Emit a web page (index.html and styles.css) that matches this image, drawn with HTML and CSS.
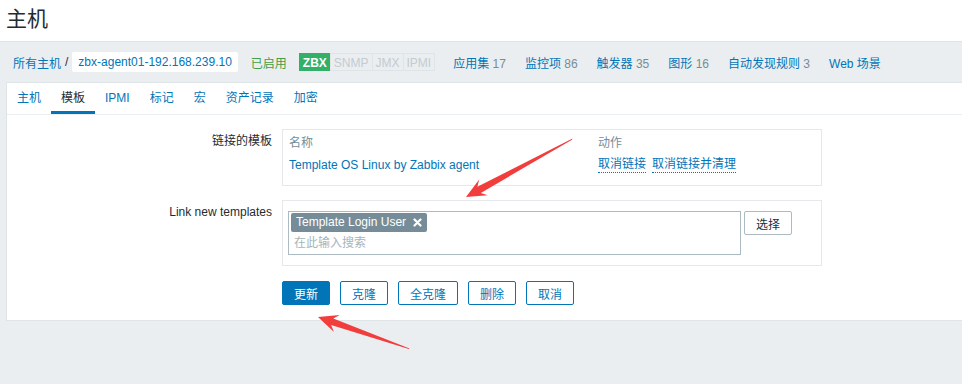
FILE: index.html
```html
<!DOCTYPE html>
<html lang="zh-CN">
<head>
    <meta charset="UTF-8">
    <title>主机</title>
    <link rel="stylesheet" href="styles.css">
</head>
<body>
    <header class="page-header">
        <h1>主机</h1>
    </header>

    <nav class="host-nav">
        <a class="crumb">所有主机</a>
        <span class="sep">/</span>
        <span class="host-name">zbx-agent01-192.168.239.10</span>
        <span class="status-on">已启用</span>
        <span class="iface-group">
            <span class="iface zbx">ZBX</span><span class="iface">SNMP</span><span class="iface">JMX</span><span class="iface">IPMI</span>
        </span>
        <a class="nav-link first">应用集 <span class="count">17</span></a>
        <a class="nav-link">监控项 <span class="count">86</span></a>
        <a class="nav-link">触发器 <span class="count">35</span></a>
        <a class="nav-link">图形 <span class="count">16</span></a>
        <a class="nav-link">自动发现规则 <span class="count">3</span></a>
        <a class="nav-link">Web 场景</a>
    </nav>

    <main class="content">
        <div class="panel">
            <ul class="tabs">
                <li>主机</li>
                <li class="active">模板</li>
                <li>IPMI</li>
                <li>标记</li>
                <li>宏</li>
                <li>资产记录</li>
                <li>加密</li>
            </ul>

            <div class="form">
                <label class="form-label">链接的模板</label>
                <div class="form-box linked">
                    <span class="th">名称</span>
                    <span class="th">动作</span>
                    <a class="link">Template OS Linux by Zabbix agent</a>
                    <span class="actions">
                        <a class="dotted">取消链接</a>
                        <a class="dotted">取消链接并清理</a>
                    </span>
                </div>

                <label class="form-label">Link new templates</label>
                <div class="form-box new-templates">
                    <div class="multiselect">
                        <span class="tag">Template Login User
                            <svg class="tag-x" width="9" height="9" viewBox="0 0 9 9">
                                <path d="M1.5 1.5 L7.5 7.5 M7.5 1.5 L1.5 7.5" stroke="#fff" stroke-width="2.2" stroke-linecap="round"/>
                            </svg>
                        </span>
                        <span class="placeholder">在此输入搜索</span>
                    </div>
                    <button class="btn-alt">选择</button>
                </div>

                <div></div>
                <div class="buttons">
                    <button class="btn primary">更新</button>
                    <button class="btn">克隆</button>
                    <button class="btn">全克隆</button>
                    <button class="btn">删除</button>
                    <button class="btn">取消</button>
                </div>
            </div>
        </div>
    </main>

    <svg class="annotations" width="962" height="384" viewBox="0 0 962 384">
        <polygon fill="#f23d3d" points="572.5,138.5 477.4,186.7 479.2,179.5 466,197 487.8,195.3 480.8,192.9 572,139.8"/>
        <polygon fill="#f23d3d" points="409.5,348.5 333.3,318.5 339.8,315 318,317 334,332 331.1,325.1 408.8,349"/>
    </svg>
</body>
</html>
```

FILE: styles.css
```css
body {
    margin: 0;
    font-family: "Liberation Sans", Arial, "Noto Sans CJK SC", sans-serif;
    font-size: 12px;
    color: #1f2c33;
    background: #ebeef0;
    overflow: hidden;
    height: 384px;
    position: relative;
}
a {
    color: #0275b8;
    text-decoration: none;
}
.page-header {
    background: #fff;
    height: 42px;
    border-bottom: 1px solid #dfe4e7;
    box-sizing: border-box;
    padding-left: 6px;
}
.page-header h1 {
    margin: 0;
    font-size: 21px;
    font-weight: normal;
    line-height: 38px;
}
.host-nav {
    display: flex;
    align-items: center;
    height: 40px;
    padding-left: 13px;
    white-space: nowrap;
}
.sep {
    margin: 0 4px;
    color: #1f2c33;
}
.host-name {
    background: #fff;
    color: #0275b8;
    height: 20px;
    line-height: 20px;
    padding: 0 6px;
    border-radius: 2px;
}
.status-on {
    color: #429e47;
    margin-left: 13px;
}
.iface-group {
    display: flex;
    margin-left: 12px;
}
.iface {
    height: 18px;
    line-height: 18px;
    padding: 0 3px;
    border: 1px solid #dfe4e7;
    margin-left: -1px;
    color: #c2ccd1;
    box-sizing: border-box;
}
.iface.zbx {
    background: #34af67;
    border-color: #34af67;
    color: #fff;
    font-weight: bold;
    padding: 0 3px;
    margin-left: 0;
}
.nav-link {
    margin-left: 19px;
}
.nav-link.first {
    margin-left: 18px;
}
.count {
    color: #768d99;
}
.content {
    padding-left: 6px;
}
.panel {
    background: #fff;
    border: 1px solid #dfe4e7;
    border-right: none;
    height: 237px;
}
.tabs {
    list-style: none;
    margin: 0;
    padding: 0;
    display: flex;
    border-bottom: 1px solid #ebeef0;
}
.tabs li {
    height: 31px;
    line-height: 30px;
    padding: 0 10px;
    color: #0275b8;
    box-sizing: border-box;
}
.tabs li.active {
    color: #1f2c33;
    box-shadow: inset 0 -3px 0 #0275b8;
}
.form {
    display: grid;
    grid-template-columns: 265px 540px;
    column-gap: 10px;
    row-gap: 14px;
    padding-top: 14px;
}
.form-label {
    text-align: right;
    padding-top: 5px;
    line-height: 14px;
}
.form-box {
    border: 1px solid #e6e9eb;
}
.linked {
    display: grid;
    grid-template-columns: 309px auto;
    row-gap: 6px;
    padding: 5px 6px 12px;
    line-height: 16px;
}
.th {
    color: #768d99;
}
.actions {
    display: flex;
    gap: 6px;
}
.dotted {
    border-bottom: 1px dotted #0275b8;
    line-height: 15px;
    height: 15px;
}
.new-templates {
    display: flex;
    align-items: flex-start;
    gap: 3px;
    padding: 10px 5px;
}
.multiselect {
    width: 453px;
    height: 44px;
    border: 1px solid #acbbc2;
    box-sizing: border-box;
    display: flex;
    flex-direction: column;
    align-items: flex-start;
}
.tag {
    display: flex;
    align-items: center;
    background: #768d99;
    color: #fff;
    height: 19px;
    line-height: 19px;
    padding: 0 5px;
    margin: 1px 0 0 2px;
    border-radius: 2px;
}
.tag-x {
    margin-left: 7px;
}
.placeholder {
    color: #a8b5bb;
    line-height: 18px;
    margin: 2px 0 0 5px;
}
.btn-alt {
    font: inherit;
    width: 48px;
    height: 24px;
    background: #fff;
    border: 1px solid #acbbc2;
    border-radius: 2px;
    color: #1f2c33;
    padding: 0;
}
.buttons {
    display: flex;
    gap: 10px;
    margin-top: 1px;
}
.btn {
    font: inherit;
    height: 24px;
    padding: 0 11px;
    background: #fff;
    border: 1px solid #0275b8;
    border-radius: 2px;
    color: #0275b8;
}
.btn.primary {
    background: #0275b8;
    color: #fff;
}
.annotations {
    position: absolute;
    left: 0;
    top: 0;
    pointer-events: none;
}
```
